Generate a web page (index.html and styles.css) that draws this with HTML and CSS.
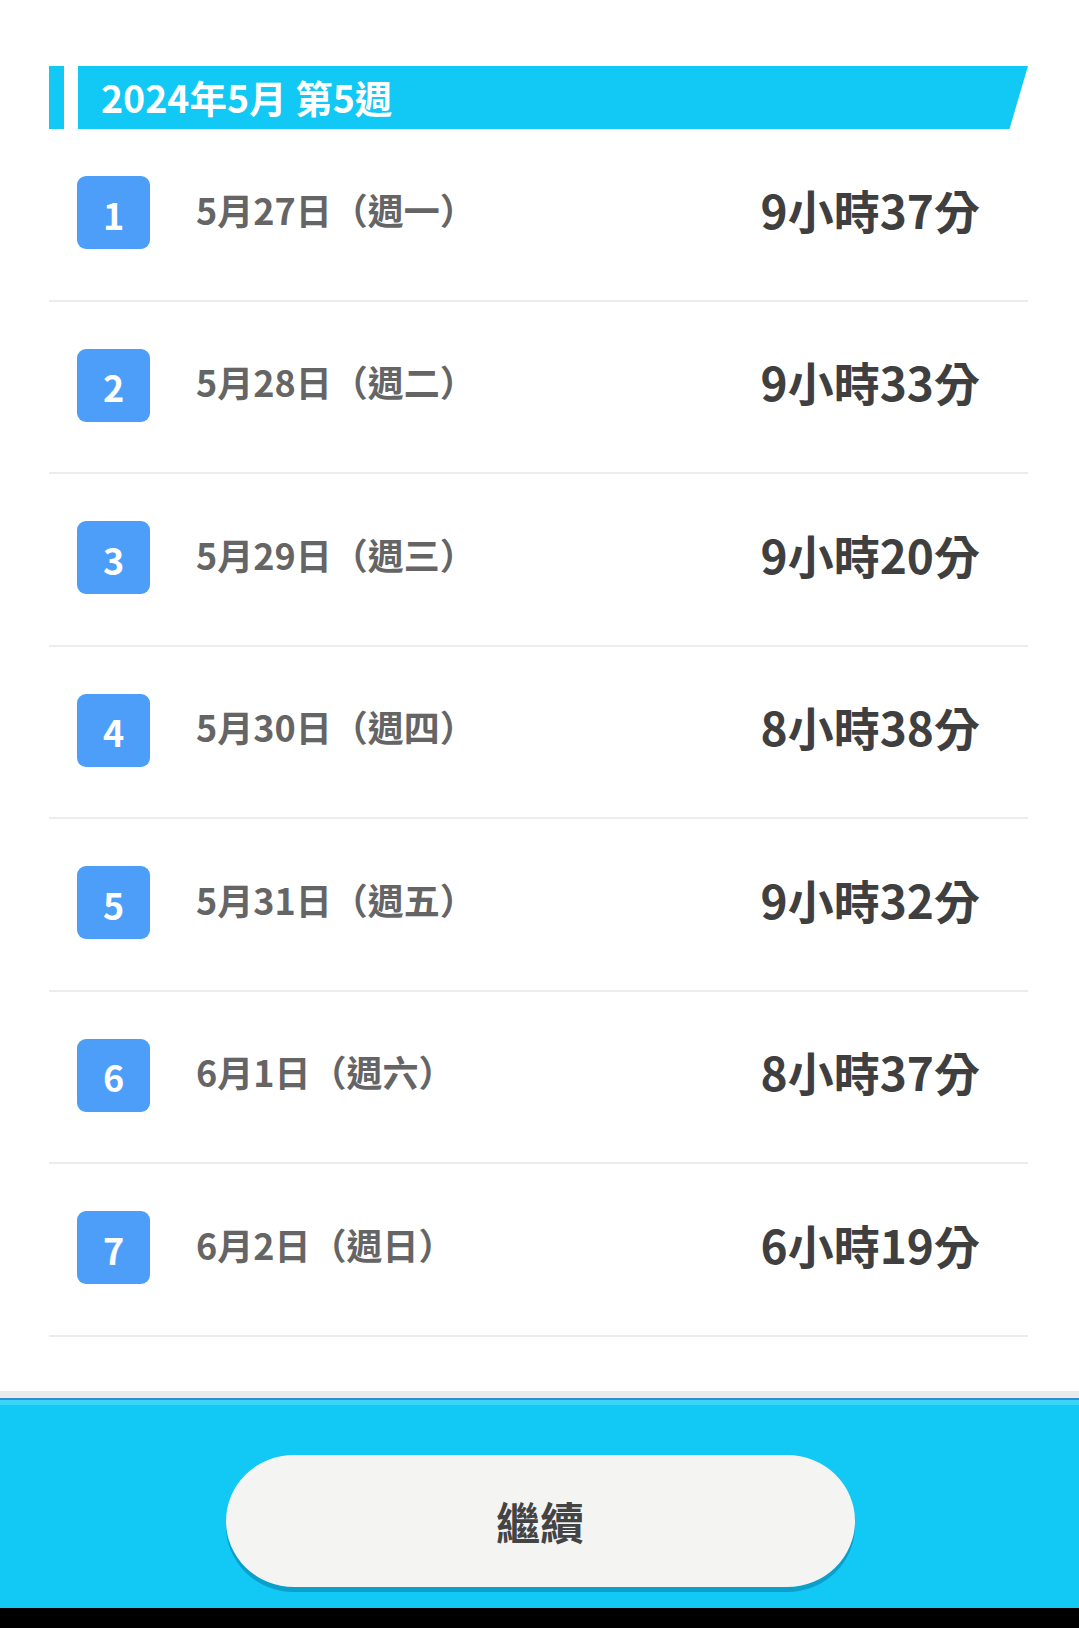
FILE: index.html
```html
<!DOCTYPE html>
<html lang="zh-Hant">
<head>
<meta charset="utf-8">
<title>2024年5月 第5週</title>
<link rel="stylesheet" href="styles.css">
</head>
<body>
<div class="page">
  <main class="content">
    <div class="week-header">
      <div class="week-stripe"></div>
      <div class="week-bar"><span class="week-title">2024年5月 第5週</span></div>
    </div>
    <ul class="day-list">
      <li class="day-row"><span class="badge">1</span><span class="date">5月27日（週一）</span><span class="duration">9小時37分</span></li>
      <li class="day-row"><span class="badge">2</span><span class="date">5月28日（週二）</span><span class="duration">9小時33分</span></li>
      <li class="day-row"><span class="badge">3</span><span class="date">5月29日（週三）</span><span class="duration">9小時20分</span></li>
      <li class="day-row"><span class="badge">4</span><span class="date">5月30日（週四）</span><span class="duration">8小時38分</span></li>
      <li class="day-row"><span class="badge">5</span><span class="date">5月31日（週五）</span><span class="duration">9小時32分</span></li>
      <li class="day-row"><span class="badge">6</span><span class="date">6月1日（週六）</span><span class="duration">8小時37分</span></li>
      <li class="day-row"><span class="badge">7</span><span class="date">6月2日（週日）</span><span class="duration">6小時19分</span></li>
    </ul>
  </main>
  <footer class="footer">
    <button class="continue-btn" type="button">繼續</button>
  </footer>
  <div class="nav-bar"></div>
</div>
</body>
</html>
```
FILE: styles.css
```css
* { box-sizing: border-box; }
html, body { margin: 0; padding: 0; background: #ffffff; }
body {
  font-family: "Noto Sans CJK TC", "Noto Sans", sans-serif;
  width: 1079px;
  height: 1628px;
  overflow: hidden;
}
.page {
  display: flex;
  flex-direction: column;
  height: 1628px;
}
.content {
  flex: 1;
  padding: 66px 51px 0 49px;
  background: #ffffff;
}
.week-header {
  display: flex;
  height: 63px;
  gap: 14px;
}
.week-stripe {
  width: 15px;
  background: #12c8f4;
}
.week-bar {
  flex: 1;
  background: #12c8f4;
  clip-path: polygon(0 0, 100% 0, calc(100% - 18.5px) 100%, 0 100%);
  display: flex;
  align-items: center;
  padding-left: 23px;
  padding-bottom: 2px;
}
.week-title {
  color: #ffffff;
  font-weight: 700;
  font-size: 37.5px;
  line-height: 1;
  letter-spacing: 0;
}
.day-list {
  list-style: none;
  margin: 0;
  padding: 0;
}
.day-row {
  display: flex;
  align-items: center;
  height: 172.5px;
  border-bottom: 2px solid #ececec;
  padding: 0 48px 3px 28px;
}
.badge {
  width: 73px;
  height: 73px;
  border-radius: 9px;
  background: #4d9ef9;
  color: #ffffff;
  font-weight: 700;
  font-size: 36px;
  display: flex;
  align-items: center;
  justify-content: center;
  line-height: 1;
  padding-top: 2px;
}
.date {
  margin-left: 46px;
  color: #656565;
  font-weight: 700;
  font-size: 36px;
  line-height: 1;
  padding-bottom: 8px;
}
.duration {
  margin-left: auto;
  color: #3f3f3f;
  font-weight: 700;
  font-size: 46px;
  line-height: 1;
  padding-bottom: 8px;
}
.footer {
  height: 210px;
  background: #12c8f4;
  border-top: 2px solid #2b8dd2;
  box-shadow: 0 -7px 0 #e8eaeb, inset 0 5px 0 #3ad3f9;
  display: flex;
  justify-content: center;
  padding-top: 55px;
  padding-left: 1px;
}
.continue-btn {
  width: 629px;
  height: 132px;
  border: none;
  border-radius: 68px / 66px;
  background: #f4f4f3;
  box-shadow: 0 5px 0 #0b9fcb;
  font-family: "Noto Sans CJK TC", "Noto Sans", sans-serif;
  font-weight: 700;
  font-size: 44px;
  color: #444444;
  padding: 0;
  line-height: 1;
}
.nav-bar {
  height: 20px;
  background: #000000;
}
```
